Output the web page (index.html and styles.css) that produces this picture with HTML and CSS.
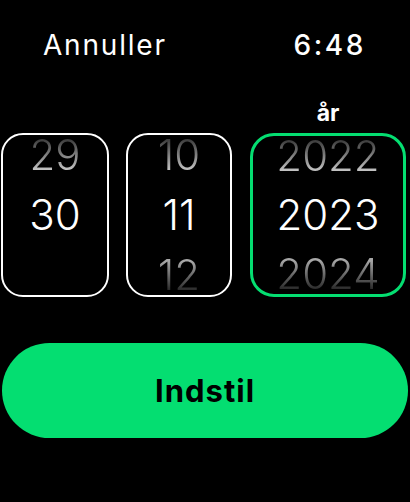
FILE: index.html
```html
<!DOCTYPE html>
<html lang="da">
<head>
<meta charset="utf-8">
<link rel="stylesheet" href="styles.css">
</head>
<body>
<div class="screen">
  <header class="header">
    <span class="cancel">Annuller</span>
    <span class="time">6:48</span>
  </header>
  <div class="labels">
    <span class="label label-year">år</span>
  </div>
  <div class="pickers">
    <div class="wheel wheel-day">
      <div class="item prev">29</div>
      <div class="item current">30</div>
      <div class="item next empty"></div>
    </div>
    <div class="wheel wheel-month">
      <div class="item prev">10</div>
      <div class="item current">11</div>
      <div class="item next">12</div>
    </div>
    <div class="wheel wheel-year active">
      <div class="item prev">2022</div>
      <div class="item current">2023</div>
      <div class="item next">2024</div>
    </div>
  </div>
  <button class="set-button">Indstil</button>
</div>
</body>
</html>
```
FILE: styles.css
```css
* { box-sizing: border-box; }
html, body {
  margin: 0;
  padding: 0;
  background: #000;
}
body {
  font-family: Inter, "Noto Sans", sans-serif;
  color: #fff;
  width: 410px;
  height: 502px;
  overflow: hidden;
}
.screen {
  display: flex;
  flex-direction: column;
}
.header {
  display: flex;
  justify-content: space-between;
  align-items: center;
  padding: 28px 44px 0 43px;
  height: 62px;
}
.cancel {
  font-size: 28px;
  line-height: 34px;
  font-weight: 400;
  letter-spacing: 1.8px;
}
.time {
  font-size: 28px;
  line-height: 34px;
  font-weight: 500;
  letter-spacing: 2.6px;
}
.labels {
  margin-top: 38px;
  height: 26px;
  display: flex;
  justify-content: flex-end;
  padding-right: 4px;
}
.label-year {
  width: 156px;
  text-align: center;
  font-size: 23px;
  line-height: 26px;
  font-weight: 700;
}
.pickers {
  margin-top: 7px;
  display: flex;
  gap: 17px;
  padding-left: 1px;
}
.wheel {
  height: 164px;
  border: 2px solid #fff;
  border-radius: 22px;
  display: flex;
  flex-direction: column;
  justify-content: center;
  align-items: center;
  gap: 20px;
}
.wheel-day { width: 108px; }
.wheel-month { width: 106px; }
.wheel-year {
  width: 156px;
  border: 3px solid #04de71;
  border-radius: 24px;
  margin-left: 1px;
  gap: 19px;
}
.item {
  height: 40px;
  line-height: 40px;
  font-size: 42px;
  font-weight: 350;
  text-align: center;
  flex: none;
}
.item.current { color: #fff; }
.item.prev {
  background: linear-gradient(to bottom, #3a3a3a 10%, #c8c8c8 90%);
  -webkit-background-clip: text;
  background-clip: text;
  color: transparent;
}
.item.next {
  background: linear-gradient(to bottom, #a8a8a8 15%, #1e1e1e 95%);
  -webkit-background-clip: text;
  background-clip: text;
  color: transparent;
}
.item.empty { width: 10px; }
.set-button {
  margin: 46px 2px 0 2px;
  height: 95px;
  border: none;
  border-radius: 48px;
  background: #04de71;
  color: #000;
  font-family: Inter, "Noto Sans", sans-serif;
  font-size: 31px;
  font-weight: 700;
  letter-spacing: 1px;
  padding: 0;
}
```
